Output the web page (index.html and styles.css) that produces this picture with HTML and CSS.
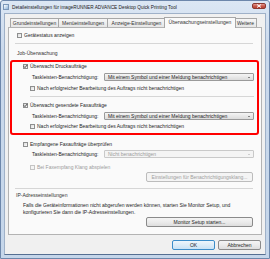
FILE: index.html
```html
<!DOCTYPE html>
<html lang="de">
<head>
    <meta charset="UTF-8">
    <title>Detaileinstellungen</title>
    <link rel="stylesheet" href="styles.css">
</head>
<body>
    <div class="window">
        <div class="titlebar">
            <span class="app-icon"></span>
            <span class="title">Detaileinstellungen für imageRUNNER ADVANCE Desktop Quick Printing Tool</span>
            <span class="close-btn">
                <svg width="6" height="4" viewBox="0 0 6 4"><path d="M1 0.5 L5 3.5 M5 0.5 L1 3.5" stroke="#fff" stroke-width="1"/></svg>
            </span>
        </div>
        <div class="client">
            <div class="tabs">
                <div class="tab">Grundeinstellungen</div>
                <div class="tab">Menüeinstellungen</div>
                <div class="tab">Anzeige-Einstellungen</div>
                <div class="tab active">Überwachungseinstellungen</div>
                <div class="tab">Weitere</div>
            </div>
            <div class="panel">
                <div class="row first">
                    <span class="cb"></span>
                    <span>Gerätestatus anzeigen</span>
                </div>
                <div class="sep top-sep"></div>
                <div class="row group-label">Job-Überwachung</div>

                <div class="highlight">
                    <div class="row">
                        <span class="cb checked"><svg width="5" height="5" viewBox="0 0 5 5"><path d="M0.8 2.4 L2 3.6 L4.3 0.9" stroke="#333" stroke-width="0.9" fill="none"/></svg></span>
                        <span>Überwacht Druckaufträge</span>
                    </div>
                    <div class="notify-row">
                        <span class="notify-label">Taskleisten-Benachrichtigung:</span>
                        <div class="combo">Mit einem Symbol und einer Meldung benachrichtigen<span class="arrow"></span></div>
                    </div>
                    <div class="row sub">
                        <span class="cb"></span>
                        <span>Nach erfolgreicher Bearbeitung des Auftrags nicht benachrichtigen</span>
                    </div>
                    <div class="sep inner-sep"></div>
                    <div class="row fax">
                        <span class="cb checked"><svg width="5" height="5" viewBox="0 0 5 5"><path d="M0.8 2.4 L2 3.6 L4.3 0.9" stroke="#333" stroke-width="0.9" fill="none"/></svg></span>
                        <span>Überwacht gesendete Faxaufträge</span>
                    </div>
                    <div class="notify-row">
                        <span class="notify-label">Taskleisten-Benachrichtigung:</span>
                        <div class="combo">Mit einem Symbol und einer Meldung benachrichtigen<span class="arrow"></span></div>
                    </div>
                    <div class="row sub last">
                        <span class="cb"></span>
                        <span>Nach erfolgreicher Bearbeitung des Auftrags nicht benachrichtigen</span>
                    </div>
                </div>

                <div class="row received">
                    <span class="cb"></span>
                    <span>Empfangene Faxaufträge überprüfen</span>
                </div>
                <div class="notify-row outside">
                    <span class="notify-label">Taskleisten-Benachrichtigung:</span>
                    <div class="combo disabled">Nicht benachrichtigen<span class="arrow"></span></div>
                </div>
                <div class="row sub disabled-row">
                    <span class="cb disabled"></span>
                    <span>Bei Faxempfang Klang abspielen</span>
                </div>
                <div class="btn-row">
                    <button class="btn disabled">Einstellungen für Benachrichtigungsklang...</button>
                </div>

                <div class="sep bottom-sep"></div>
                <div class="row ip-label">IP-Adresseinstellungen</div>
                <p class="ip-text">Falls die Geräteinformationen nicht abgerufen werden können, starten Sie Monitor Setup, und<br>konfigurieren Sie dann die IP-Adresseinstellungen.</p>
                <div class="btn-row monitor">
                    <button class="btn">Monitor Setup starten...</button>
                </div>
            </div>
            <div class="footer">
                <button class="btn dialog default">OK</button>
                <button class="btn dialog">Abbrechen</button>
            </div>
        </div>
    </div>
</body>
</html>
```

FILE: styles.css
```css
* {
    box-sizing: border-box;
}
body {
    margin: 0;
    font-family: "Liberation Sans", Arial, sans-serif;
    font-size: 5px;
    color: #1e1e1e;
    background: #ffffff;
}
.window {
    width: 270px;
    height: 259px;
    background: linear-gradient(#dce7f4, #cad9ec 20%, #c5d6ea);
    border: 1px solid #6d87ab;
    border-radius: 3px 3px 0 0;
    display: flex;
    flex-direction: column;
}
.titlebar {
    height: 12px;
    display: flex;
    align-items: center;
    padding: 0 3px 0 2px;
}
.app-icon {
    width: 6px;
    height: 6px;
    margin-right: 3px;
    background: linear-gradient(135deg, #ffffff, #8fb3d9);
    border: 1px solid #7c97b8;
}
.title {
    flex: 1;
    font-size: 4.75px;
    color: #1a1a1a;
    white-space: nowrap;
}
.close-btn {
    width: 14px;
    height: 6px;
    margin-top: -2px;
    border: 1px solid #8b3a32;
    border-radius: 2px;
    background: linear-gradient(#e59b8f, #c8584a 55%, #b94434);
    display: flex;
    align-items: center;
    justify-content: center;
}
.close-btn svg {
    display: block;
}
.client {
    flex: 1;
    margin: 0 3px 3px 3px;
    background: #f0f0f0;
    border: 1px solid #9fb1c8;
    border-bottom-color: #566f92;
    padding: 3px 3px 0 3px;
    display: flex;
    flex-direction: column;
}
.tabs {
    display: flex;
    height: 10px;
    align-items: flex-end;
    padding-left: 2px;
    position: relative;
    z-index: 1;
}
.tab {
    height: 9px;
    border: 1px solid #a7a7a7;
    border-bottom: none;
    background: linear-gradient(#f6f6f6, #e6e6e6);
    color: #333;
    line-height: 8px;
    text-align: center;
    white-space: nowrap;
    overflow: hidden;
}
.tab:nth-child(1) {
    width: 49px;
}
.tab:nth-child(2) {
    width: 50px;
    margin-left: -1px;
}
.tab:nth-child(3) {
    width: 59px;
    margin-left: -1px;
}
.tab:nth-child(5) {
    width: 23px;
    margin-left: -1px;
}
.tab.active {
    width: 72px;
    height: 11px;
    margin: 0 -1px -1px -2px;
    background: #fafafa;
    line-height: 9px;
    position: relative;
    z-index: 2;
}
.panel {
    height: 208px;
    background: #fafafa;
    border: 1px solid #b3b3b3;
    padding: 4px 8px 0 8px;
    display: flex;
    flex-direction: column;
}
.row {
    height: 6px;
    display: flex;
    align-items: center;
    white-space: nowrap;
}
.cb {
    width: 5px;
    height: 5px;
    border: 1px solid #8e8f8f;
    background: linear-gradient(135deg, #dcdcdc, #fbfbfb);
    margin-right: 2px;
    flex-shrink: 0;
    position: relative;
}
.cb svg {
    position: absolute;
    left: -1px;
    top: -1px;
}
.cb.disabled {
    border-color: #c4c4c4;
    background: #f4f4f4;
}
.sep {
    height: 1px;
    background: #d6d6d6;
}
.top-sep {
    margin: 5px 0 0 -2px;
}
.group-label {
    margin-top: 6px;
    color: #333;
}
.highlight {
    margin: 4px -6px 0 -7px;
    height: 75px;
    border: 2px solid #ff0000;
    border-radius: 3px;
    padding: 1px 3px 0 11px;
    display: flex;
    flex-direction: column;
}
.notify-row {
    height: 8px;
    margin-top: 4px;
    display: flex;
    align-items: center;
    padding-left: 9px;
}
.notify-label {
    width: 72px;
    flex-shrink: 0;
    white-space: nowrap;
}
.combo {
    flex: 1;
    height: 8px;
    border: 1px solid #9a9a9a;
    border-radius: 1px;
    background: linear-gradient(#f5f5f5, #e8e8e8 50%, #dcdcdc);
    padding-left: 3px;
    line-height: 6px;
    position: relative;
    white-space: nowrap;
}
.arrow {
    position: absolute;
    right: 3px;
    top: 2.5px;
    border-left: 1.5px solid transparent;
    border-right: 1.5px solid transparent;
    border-top: 1.5px solid #222;
}
.combo.disabled {
    background: #f4f4f4;
    border-color: #c9c9c9;
    color: #9b9b9b;
}
.combo.disabled .arrow {
    border-top-color: #a8a8a8;
}
.sub {
    margin-top: 4px;
    padding-left: 7px;
}
.highlight .sub.last {
    margin-top: 3px;
}
.inner-sep {
    margin: 5px 0 0 7px;
}
.fax {
    margin-top: 5px;
}
.received {
    margin-top: 6px;
    padding-left: 6px;
}
.notify-row.outside {
    margin-top: 3px;
    padding-left: 15px;
    margin-right: -1px;
}
.disabled-row {
    margin-top: 6px;
    padding-left: 13px;
    color: #9b9b9b;
}
.btn-row {
    display: flex;
    justify-content: flex-end;
    margin-top: 2px;
}
.btn {
    font-family: inherit;
    font-size: inherit;
    width: 107px;
    height: 10px;
    padding: 0;
    border: 1px solid #8a8a8a;
    border-radius: 2px;
    background: linear-gradient(#f4f4f4, #ebebeb 50%, #dddddd);
    color: #1e1e1e;
    line-height: 8px;
}
.btn.disabled {
    border-color: #bcbcbc;
    background: #f4f4f4;
    color: #a0a0a0;
}
.bottom-sep {
    margin: 6px 0 0 -2px;
}
.ip-label {
    margin-top: 3px;
    margin-left: -1px;
    color: #333;
}
.ip-text {
    margin: 4px 0 0 6px;
    line-height: 7px;
    white-space: nowrap;
}
.btn-row.monitor {
    margin-top: 1px;
}
.footer {
    display: flex;
    justify-content: flex-end;
    gap: 3px;
    padding: 5px 1px 0 0;
}
.btn.dialog {
    width: 43px;
    height: 10px;
}
.btn.default {
    border-color: #3c8dc9;
    background: linear-gradient(#eef6fc, #dcecf8 50%, #c9e2f5);
}
```
